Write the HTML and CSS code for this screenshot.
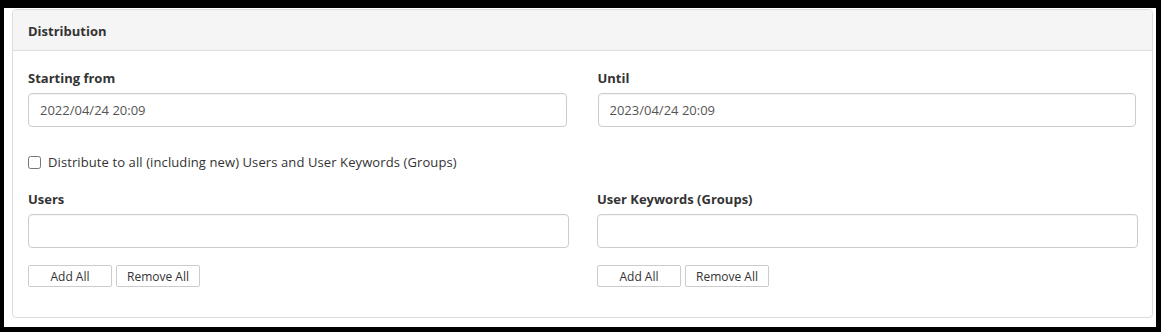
FILE: index.html
```html
<!DOCTYPE html>
<html lang="en">
<head>
  <meta charset="UTF-8" />
  <meta name="viewport" content="width=device-width, initial-scale=1" />
  <title>Distribution</title>
  <link rel="stylesheet" href="styles.css">
</head>
<body>
  <div class="frame">
    <section class="panel">
      <div class="panel-heading">Distribution</div>
      <div class="panel-body">
        <div class="row">
          <div class="field">
            <label for="start">Starting from</label>
            <input type="text" id="start" class="form-control" value="2022/04/24 20:09" />
          </div>
          <div class="field">
            <label for="until">Until</label>
            <input type="text" id="until" class="form-control" value="2023/04/24 20:09" />
          </div>
        </div>

        <label class="check">
          <input type="checkbox" />
          <span>Distribute to all (including new) Users and User Keywords (Groups)</span>
        </label>

        <div class="row row-wide">
          <div class="field">
            <label for="users">Users</label>
            <input type="text" id="users" class="form-control" />
            <div class="btn-group">
              <button class="btn">Add All</button>
              <button class="btn">Remove All</button>
            </div>
          </div>
          <div class="field">
            <label for="groups">User Keywords (Groups)</label>
            <input type="text" id="groups" class="form-control" />
            <div class="btn-group">
              <button class="btn">Add All</button>
              <button class="btn">Remove All</button>
            </div>
          </div>
        </div>
      </div>
    </section>
  </div>
</body>
</html>
```

FILE: styles.css
```css
:root {
  --border: #dddddd;
  --input-border: #cccccc;
  --heading-bg: #f5f5f5;
  --text: #333333;
  --muted: #555555;
}
* { box-sizing: border-box; }
html, body { height: 100%; }
body {
  margin: 0;
  padding: 8px 5px 5px 4px;
  background: #000;
  font-family: 'Open Sans', 'Noto Sans', sans-serif;
  font-size: 13px;
  color: var(--text);
}
.frame {
  height: 319px;
  background: #fff;
  padding: 1px 3px 9px 8px;
}
.panel {
  height: 100%;
  border: 1px solid var(--border);
  border-radius: 4px;
  overflow: hidden;
}
.panel-heading {
  background: var(--heading-bg);
  border-bottom: 1px solid var(--border);
  padding: 11px 15px 9px;
  line-height: 20px;
  font-weight: 700;
}
.panel-body {
  padding: 17px 16px 0 15px;
}
.row {
  display: grid;
  grid-template-columns: 1fr 1fr;
  column-gap: 31px;
}
.row-wide {
  margin-right: -2px;
  column-gap: 28px;
}
.field label {
  display: block;
  font-weight: 700;
  line-height: 20px;
  margin-bottom: 5px;
}
.form-control {
  display: block;
  width: 100%;
  height: 34px;
  padding: 6px 11px;
  border: 1px solid var(--input-border);
  border-radius: 4px;
  font-family: inherit;
  font-size: 13px;
  color: var(--muted);
  background: #fff;
  box-shadow: inset 0 1px 1px rgba(0,0,0,0.04);
}
.check {
  display: flex;
  align-items: center;
  gap: 7px;
  margin: 25px 0 17px;
  line-height: 20px;
  letter-spacing: 0.1px;
}
.check input {
  margin: 0;
  width: 13px;
  height: 13px;
}
.btn-group {
  display: flex;
  gap: 4px;
  margin-top: 17px;
}
.btn {
  width: 84px;
  height: 22px;
  padding: 0;
  border: 1px solid var(--input-border);
  border-radius: 2px;
  background: #fff;
  font-family: inherit;
  font-size: 12px;
  color: var(--text);
  cursor: pointer;
}
```
